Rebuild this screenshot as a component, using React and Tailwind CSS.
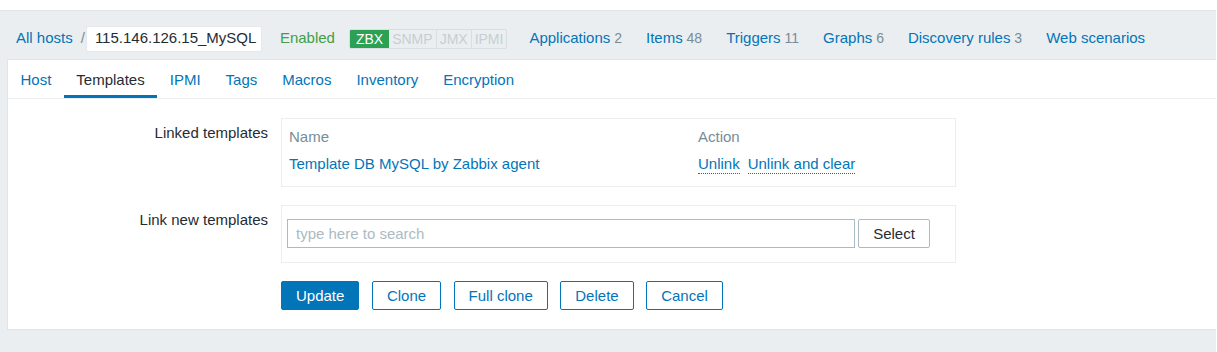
import React from "react";

const font = { fontFamily: '"Liberation Sans", Arial, sans-serif' };

const navLinks = [
  { label: "Applications", count: "2" },
  { label: "Items", count: "48" },
  { label: "Triggers", count: "11" },
  { label: "Graphs", count: "6" },
  { label: "Discovery rules", count: "3" },
  { label: "Web scenarios", count: null },
];

const tabs = ["Host", "Templates", "IPMI", "Tags", "Macros", "Inventory", "Encryption"];

const actionButtons = ["Clone", "Full clone", "Delete", "Cancel"];

export default function App() {
  return (
    <div className="bg-white h-[352px] overflow-hidden text-[15px]" style={font}>
      <div className="w-[1216px] h-[352px] mt-[10px] bg-[#ebeef0] border-t border-[#dfe4e7]">
        {/* Header */}
        <div className="flex items-center h-[48px] pt-[7px] pl-4">
          <a className="text-[#0275b8]">All hosts</a>
          <span className="ml-[8px] mr-[1px] text-[#768d99]">/</span>
          <div className="bg-white rounded-[2px] h-[26px] w-[176px] px-[8px] flex items-center text-[#1f2c33] text-[15px] border border-[#e5e9eb]">
            115.146.126.15_MySQL
          </div>
          <span className="ml-[18px] text-[#429e47] text-[15px]">Enabled</span>
          <div className="ml-[14px] flex h-[20px] text-[14px] leading-[18px] border border-[#d7dde0] rounded-[2px] overflow-hidden">
            <span className="bg-[#2da153] text-white px-[6px]">ZBX</span>
            <span className="text-[#c5ced3] px-[3px] border-r border-[#d7dde0]">SNMP</span>
            <span className="text-[#c5ced3] px-[3px] border-r border-[#d7dde0]">JMX</span>
            <span className="text-[#c5ced3] px-[3px]">IPMI</span>
          </div>
          <div className="flex ml-[22px] gap-[24px] text-[15px]">
            {navLinks.map((n) => (
              <a key={n.label} className="text-[#0275b8]">
                {n.label}
                {n.count && <span className="text-[#768d99] text-[14px]"> {n.count}</span>}
              </a>
            ))}
          </div>
        </div>

        {/* Card */}
        <div className="ml-[7px] bg-white border border-[#dfe4e7] border-r-0 h-[271px]">
          <div className="flex border-b border-[#ebeef0] h-[39px]">
            {tabs.map((t) => (
              <div
                key={t}
                className={
                  t === "Templates"
                    ? "px-[12.5px] flex items-center text-[#1f2c33] text-[15px] border-b-[3px] border-[#0275b8] pt-[5px]"
                    : "px-[12.5px] flex items-center text-[#0275b8] text-[15px] border-b-[3px] border-transparent pt-[5px]"
                }
              >
                {t}
              </div>
            ))}
          </div>

          <div className="pt-[19px]">
            {/* Linked templates */}
            <div className="flex">
              <div className="w-[260px] text-right pt-[6px] text-[#1f2c33] leading-[18px]">Linked templates</div>
              <div className="ml-[13px] w-[675px] h-[69px] border border-[#ebeef0] px-[7px] pt-[9px]">
                <div className="flex text-[#768d99] leading-[18px]">
                  <div className="w-[409px]">Name</div>
                  <div>Action</div>
                </div>
                <div className="flex mt-[9px] leading-[18px]">
                  <div className="w-[409px] text-[#0275b8]">Template DB MySQL by Zabbix agent</div>
                  <div className="flex gap-[8px]">
                    <a className="text-[#0275b8] border-b border-dotted border-[#0275b8]">Unlink</a>
                    <a className="text-[#0275b8] border-b border-dotted border-[#0275b8]">Unlink and clear</a>
                  </div>
                </div>
              </div>
            </div>

            {/* Link new templates */}
            <div className="flex mt-[18px]">
              <div className="w-[260px] text-right pt-[6px] text-[#1f2c33] leading-[18px]">Link new templates</div>
              <div className="ml-[13px] w-[675px] h-[58px] border border-[#ebeef0] pl-[5px] pt-[13px] flex items-start">
                <div className="w-[568px] h-[29px] border border-[#acbbc2] flex items-center px-[8px] pt-[1px] text-[#acbbc2]">
                  type here to search
                </div>
                <button className="ml-[3px] w-[72px] h-[29px] pt-[1px] border border-[#acbbc2] rounded-[2px] text-[#1f2c33] bg-white">
                  Select
                </button>
              </div>
            </div>

            {/* Buttons */}
            <div className="flex ml-[273px] mt-[18px] gap-[12.5px]">
              <button className="h-[29px] px-[14px] pt-[1px] bg-[#0275b8] border border-[#0275b8] rounded-[2px] text-white">
                Update
              </button>
              {actionButtons.map((b) => (
                <button
                  key={b}
                  className="h-[29px] px-[14px] pt-[1px] bg-white border border-[#0275b8] rounded-[2px] text-[#0275b8]"
                >
                  {b}
                </button>
              ))}
            </div>
          </div>
        </div>
      </div>
    </div>
  );
}
